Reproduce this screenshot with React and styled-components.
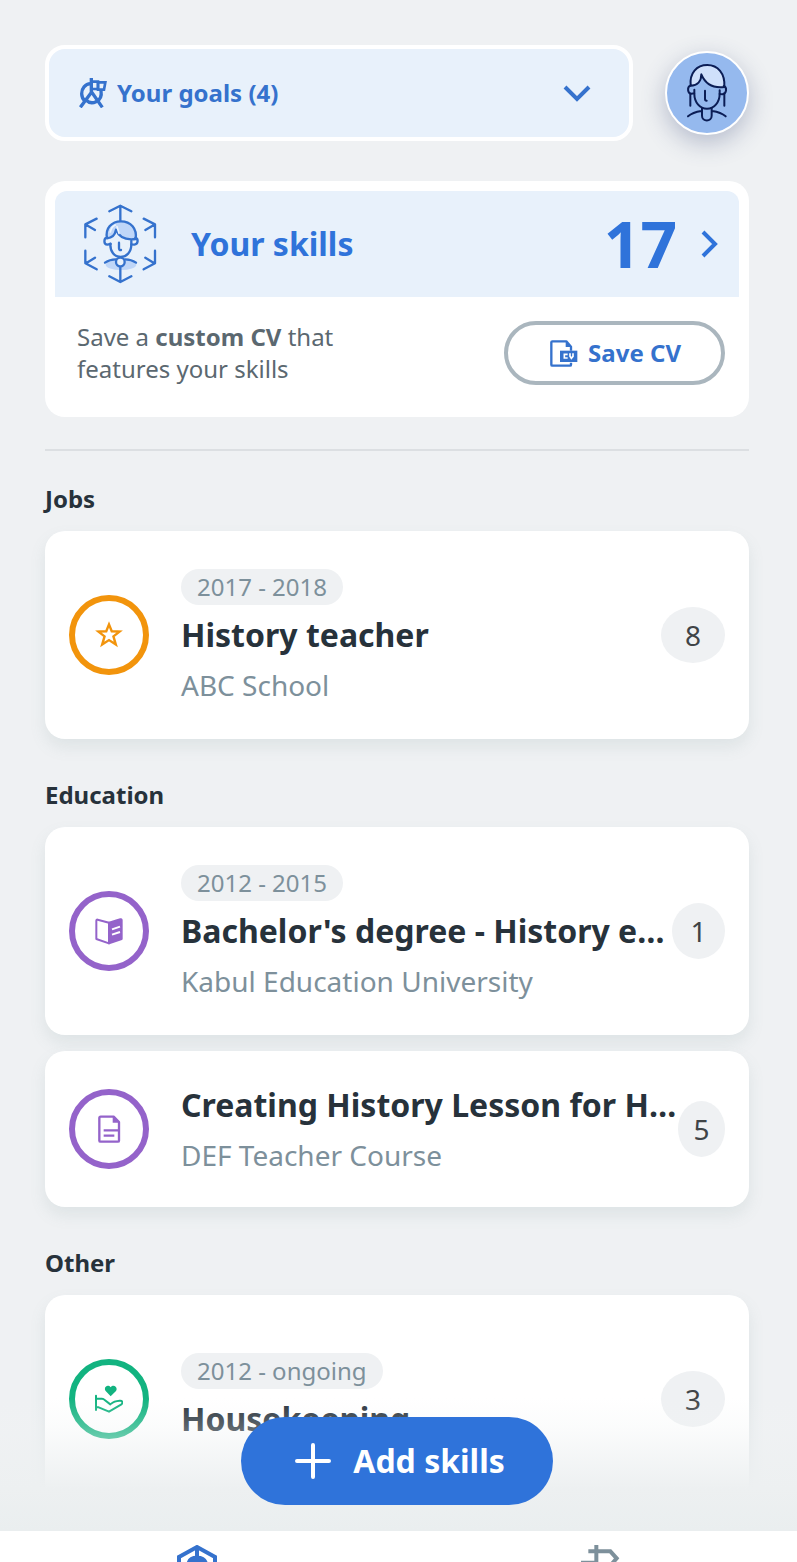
import React from "react";
import styled, { createGlobalStyle } from "styled-components";

const c = {
  blue: "#2f73da",
  icon: "#3572cd",
  pale: "#e8f1fb",
  page: "#eff1f3",
  ink: "#27323b",
  mute: "#7d909b",
  text: "#5b6870",
  chip: "#eff1f3",
  orange: "#f2940c",
  purple: "#9463ca",
  green: "#12b380",
  navy: "#0b1d55",
};

const GlobalStyle = createGlobalStyle`
  *, *::before, *::after { box-sizing: border-box; }
  body { margin: 0; background: ${c.page}; font-family: "Noto Sans", sans-serif; color: ${c.ink}; }
  button { font-family: inherit; cursor: pointer; }
  h1, h2, h3, p { margin: 0; }
`;

const Screen = styled.div`
  display: flex;
  flex-direction: column;
  height: 100vh;
  overflow: hidden;
`;

const Content = styled.main`
  flex: 1;
  min-height: 0;
  overflow: hidden;
  padding: 45px 48px 0 45px;
`;

const TopBar = styled.header`
  display: flex;
  align-items: center;
  gap: 32px;
`;

const GoalsButton = styled.button`
  flex: 1;
  height: 96px;
  display: flex;
  align-items: center;
  gap: 10px;
  padding: 0 38px 0 30px;
  border: 4px solid #fff;
  border-radius: 20px;
  background: ${c.pale};
  color: ${c.icon};
  font-size: 24px;
  line-height: 32px;
  font-weight: 700;
  svg:last-child { margin-left: auto; }
`;

const Avatar = styled.button`
  flex: none;
  width: 84px;
  height: 84px;
  padding: 0;
  border: 2px solid #fff;
  border-radius: 50%;
  overflow: hidden;
  background: #95b9ee;
  box-shadow: 0 8px 24px rgba(60, 75, 120, 0.32);
  svg { display: block; }
`;

const SkillsCard = styled.section`
  margin-top: 40px;
  padding: 10px;
  border-radius: 20px;
  background: #fff;
`;

const SkillsLink = styled.a`
  display: flex;
  align-items: center;
  height: 106px;
  padding: 0 20px 0 28px;
  border-radius: 12px 12px 0 0;
  background: ${c.pale};
  color: ${c.blue};
  text-decoration: none;
`;

const SkillsTitle = styled.h1`
  flex: 1;
  margin-left: 34px;
  font-size: 32px;
  line-height: 44px;
  font-weight: 700;
`;

const SkillsTotal = styled.span`
  margin-right: 24px;
  font-size: 64px;
  line-height: 88px;
  font-weight: 700;
`;

const SaveRow = styled.div`
  display: flex;
  align-items: center;
  justify-content: space-between;
  height: 110px;
  padding: 2px 14px 0 22px;
`;

const SaveText = styled.p`
  width: 280px;
  font-size: 24px;
  line-height: 32px;
  color: ${c.text};
  b { font-weight: 700; }
`;

const SaveButton = styled.button`
  display: flex;
  align-items: center;
  gap: 10px;
  height: 64px;
  padding: 0 40px 0 42px;
  border: 4px solid #aab6be;
  border-radius: 32px;
  background: #fff;
  color: ${c.icon};
  font-size: 24px;
  line-height: 32px;
  font-weight: 700;
`;

const Rule = styled.hr`
  height: 2px;
  margin: 32px 0;
  border: 0;
  background: #dcdfe2;
`;

const Group = styled.section`
  & + & { margin-top: 40px; }
`;

const GroupTitle = styled.h2`
  margin-bottom: 16px;
  font-size: 24px;
  line-height: 32px;
  font-weight: 700;
`;

const Card = styled.article`
  display: flex;
  align-items: center;
  min-height: ${(p) => (p.$dated ? 208 : 156)}px;
  padding: 0 24px;
  border-radius: 20px;
  background: #fff;
  box-shadow: 0 8px 16px rgba(110, 140, 140, 0.13);
  & + & { margin-top: 16px; }
`;

const Ring = styled.span`
  flex: none;
  display: grid;
  place-items: center;
  width: 80px;
  height: 80px;
  margin-right: 32px;
  border: 6px solid ${(p) => p.$color};
  border-radius: 50%;
  color: ${(p) => p.$color};
`;

const Body = styled.div`
  flex: 1;
  min-width: 0;
  padding-bottom: ${(p) => (p.$compact ? 4 : 0)}px;
`;

const Dates = styled.span`
  display: block;
  width: fit-content;
  margin-bottom: 8px;
  padding: 0 16px;
  border-radius: 18px;
  background: ${c.chip};
  color: ${c.mute};
  font-size: 24px;
  line-height: 36px;
`;

const Name = styled.h3`
  overflow: hidden;
  text-overflow: ellipsis;
  white-space: nowrap;
  font-size: 32px;
  line-height: 44px;
  font-weight: 700;
`;

const Place = styled.p`
  margin-top: 12px;
  color: ${c.mute};
  font-size: 28px;
  line-height: 32px;
`;

const Count = styled.span`
  flex: none;
  width: ${(p) => p.$width}px;
  border-radius: 50%;
  background: ${c.chip};
  color: #3f4447;
  font-size: 28px;
  line-height: 56px;
  text-align: center;
`;

const Dock = styled.footer`
  position: relative;
  flex: none;
`;

const Fade = styled.div`
  position: absolute;
  left: 0;
  right: 0;
  bottom: 100%;
  display: flex;
  justify-content: center;
  align-items: flex-end;
  height: 140px;
  padding: 0 48px 26px 45px;
  background: linear-gradient(rgba(237, 240, 241, 0) 5%, rgba(240, 243, 244, 0.25) 25%, #edf0f1 70%, #eaeeef);
`;

const AddButton = styled.button`
  display: flex;
  align-items: center;
  gap: 22px;
  height: 88px;
  padding: 0 48px 0 54px;
  border: 0;
  border-radius: 44px;
  background: ${c.blue};
  color: #fff;
  font-size: 32px;
  line-height: 44px;
  font-weight: 700;
`;

const Tabs = styled.nav`
  display: flex;
  justify-content: space-between;
  height: 31px;
  padding: 14px 22% 0;
  overflow: hidden;
  background: #fff;
`;

const Tab = styled.a`
  display: block;
  width: 44px;
  color: ${(p) => (p.$active ? c.icon : c.mute)};
  svg { display: block; }
`;

const line = { fill: "none", stroke: "currentColor" };

const GoalIcon = () => (
  <svg width="28" height="30" viewBox="0 0 84 90" {...line} strokeWidth="10" aria-hidden="true">
    <path d="M35 17C18 18 8 31 8 47c0 10 5 18 11 23M66 38c3 17-4 28-15 33-10 5-22 3-30-5" />
    <path d="M4 88L38 42 70 88M37 0v48" />
    <path d="M37 11h24M57 13h22l-4 22H57zM40 33h17" strokeWidth="8" />
    <path d="M57 12v22" strokeWidth="8" />
  </svg>
);

const ChevronDown = () => (
  <svg width="28" height="20" viewBox="0 0 28 20" {...line} strokeWidth="4" aria-hidden="true">
    <path d="M2 4l12 12L26 4" />
  </svg>
);

const ChevronRight = () => (
  <svg width="18" height="28" viewBox="0 0 18 28" {...line} strokeWidth="4" aria-hidden="true">
    <path d="M2 2l12 12L2 26" />
  </svg>
);

const AvatarFace = () => (
  <svg width="80" height="80" viewBox="381 54 240 240" fill="none" stroke={c.navy} strokeWidth="6" strokeLinecap="round" strokeLinejoin="round" aria-hidden="true">
    <path d="M452 152c-4-38 18-62 50-62 31 0 54 25 51 66-32 4-56-7-69-38 0 21-12 34-32 34z" fill="#cfe0fb" />
    <path d="M451 152c-10 4-9 23 3 24l9-1v-11M551 153c11 4 9 23-3 25l-9-1v-11" />
    <path d="M463 176c0 25 16 45 38 45s38-20 38-45M451 178v34M553 178v34M495 167v25q0 5 5 5" />
    <path d="M486 219v23c0 19 29 19 29 0v-23M484 228q-26 4-40 16M517 228q26 4 40 16" />
  </svg>
);

const SkillsIcon = () => (
  <svg width="74" height="80" viewBox="129 86 222 240" fill="none" stroke={c.icon} strokeWidth="7" strokeLinecap="round" strokeLinejoin="round" aria-hidden="true">
    <ellipse cx="243" cy="268" rx="46" ry="16" fill="#bfd6f8" stroke="none" />
    <path d="M241 136V92M208 108l33-17 33 17M241 273v47M208 303l33 17 33-17" />
    <path d="M136 186v-39l34-17M138 148l27 16M345 186v-39l-34-17M343 148l-27 16" />
    <path d="M136 226v38l34 18M138 264l27-17M345 226v38l-34 18M343 264l-27-17" />
    <path d="M201 189c-6-30 14-51 42-51 29 0 49 22 44 53-29 4-50-5-59-28-3 17-11 25-27 26z" fill="#bfd6f8" />
    <path d="M211 170q3-16 15-21M237 174l-6-20" stroke="#eef5fd" strokeWidth="5" />
    <path d="M201 187c-10 1-11 20 1 21l10-2M286 188c10 2 9 19-3 20l-9-1v-10" />
    <path d="M211 205c-1 24 12 40 31 40 18 0 32-15 32-38M237 202v17q0 6 6 5" />
    <path d="M195 262c10-7 20-10 32-10M288 262c-10-7-20-10-32-10" />
    <circle cx="241" cy="260" r="13" fill={c.pale} />
  </svg>
);

const CvIcon = () => (
  <svg width="28" height="27" viewBox="210 448 84 81" {...line} strokeWidth="7" aria-hidden="true">
    <path d="M273 516v6q0 3-3 3h-53q-3 0-3-3v-67q0-3 3-3h42l14 16v12" strokeLinejoin="round" />
    <path d="M257 451v18h18z" fill="currentColor" stroke="none" />
    <path d="M240 480h52v34h-52z" fill="currentColor" stroke="none" />
    <path d="M263 491h-10v11h10M270 488v9l4 6 5-6v-9" stroke="#fff" strokeWidth="5" />
  </svg>
);

const StarIcon = () => (
  <svg width="28" height="28" viewBox="136 184 82 82" {...line} strokeWidth="7" aria-hidden="true">
    <path d="M177 194l8 20 23 1-18 14 7 24-20-13-20 13 7-24-18-14 23-1z" />
  </svg>
);

const BookIcon = () => (
  <svg width="28" height="28" viewBox="135 171 84 84" {...line} strokeWidth="6" strokeLinejoin="round" aria-hidden="true">
    <path d="M177 188l-34-9q-4-1-4 3v55l38 13z" />
    <path d="M177 188l34-10q4-1 4 3v56l-38 13z" fill="currentColor" />
    <path d="M186 208l24-8M186 224l24-8" stroke="#fff" strokeWidth="6" />
  </svg>
);

const DocIcon = () => (
  <svg width="28" height="28" viewBox="135 134 84 84" {...line} strokeWidth="7" aria-hidden="true">
    <path d="M191 139h-39q-4 0-4 4v68q0 3 4 3h51q4 0 4-3v-56z" strokeLinejoin="round" />
    <path d="M188 138v19h20z" fill="currentColor" stroke="none" />
    <path d="M161 180h47M161 196h32" strokeWidth="7" />
  </svg>
);

const CareIcon = () => (
  <svg width="28" height="28" viewBox="136 166 84 84" {...line} strokeWidth="6" strokeLinejoin="round" strokeLinecap="round" aria-hidden="true">
    <path d="M183 200l-15-16c-8-10 6-22 15-11 9-11 23 1 16 11z" fill="currentColor" stroke="none" />
    <path d="M139 198v43M139 207h18q5 0 8 4l17 13M139 233h8l31 13 36-21c7-5 5-13-4-12-10 1-18 2-24 8" />
  </svg>
);

const PlusIcon = () => (
  <svg width="36" height="36" viewBox="0 0 36 36" {...line} strokeWidth="4" strokeLinecap="round" aria-hidden="true">
    <path d="M18 2v32M2 18h32" />
  </svg>
);

const HexIcon = () => (
  <svg width="44" height="48" viewBox="525 435 132 144" {...line} strokeWidth="12" aria-hidden="true">
    <path d="M591 441l54 30v66l-54 30-54-30v-66zM591 441v42" />
    <path d="M567 486c5-17 43-17 49 0z" fill="currentColor" />
  </svg>
);

const SignpostIcon = () => (
  <svg width="44" height="48" viewBox="536 435 132 144" {...line} strokeWidth="12" aria-hidden="true">
    <path d="M591 435v144M567 454h66l19 21-19 22h-88M545 488h46" />
  </svg>
);

const groups = [
  {
    title: "Jobs",
    items: [{ dates: "2017 - 2018", name: "History teacher", place: "ABC School", count: 8, width: 64, color: c.orange, Icon: StarIcon }],
  },
  {
    title: "Education",
    items: [
      { dates: "2012 - 2015", name: "Bachelor's degree - History education", place: "Kabul Education University", count: 1, width: 53, color: c.purple, Icon: BookIcon },
      { name: "Creating History Lesson for High School", place: "DEF Teacher Course", count: 5, width: 47, color: c.purple, Icon: DocIcon },
    ],
  },
  {
    title: "Other",
    items: [{ dates: "2012 - ongoing", name: "Housekeeping", count: 3, width: 64, color: c.green, Icon: CareIcon }],
  },
];

export default function App() {
  return (
    <Screen>
      <GlobalStyle />
      <Content>
        <TopBar>
          <GoalsButton type="button" aria-expanded="false">
            <GoalIcon />
            Your goals (4)
            <ChevronDown />
          </GoalsButton>
          <Avatar type="button" aria-label="Profile">
            <AvatarFace />
          </Avatar>
        </TopBar>

        <SkillsCard>
          <SkillsLink href="#skills">
            <SkillsIcon />
            <SkillsTitle>Your skills</SkillsTitle>
            <SkillsTotal>17</SkillsTotal>
            <ChevronRight />
          </SkillsLink>
          <SaveRow>
            <SaveText>
              Save a <b>custom CV</b> that features your skills
            </SaveText>
            <SaveButton type="button">
              <CvIcon />
              Save CV
            </SaveButton>
          </SaveRow>
        </SkillsCard>

        <Rule />

        {groups.map((group) => (
          <Group key={group.title}>
            <GroupTitle>{group.title}</GroupTitle>
            {group.items.map(({ Icon, ...item }) => (
              <Card key={item.name} $dated={Boolean(item.dates)}>
                <Ring $color={item.color}>
                  <Icon />
                </Ring>
                <Body $compact={!item.dates || !item.place}>
                  {item.dates && <Dates>{item.dates}</Dates>}
                  <Name>{item.name}</Name>
                  {item.place && <Place>{item.place}</Place>}
                </Body>
                <Count $width={item.width}>{item.count}</Count>
              </Card>
            ))}
          </Group>
        ))}
      </Content>

      <Dock>
        <Fade>
          <AddButton type="button">
            <PlusIcon />
            Add skills
          </AddButton>
        </Fade>
        <Tabs>
          <Tab href="#skills" $active aria-label="Skills">
            <HexIcon />
          </Tab>
          <Tab href="#paths" aria-label="Paths">
            <SignpostIcon />
          </Tab>
        </Tabs>
      </Dock>
    </Screen>
  );
}
